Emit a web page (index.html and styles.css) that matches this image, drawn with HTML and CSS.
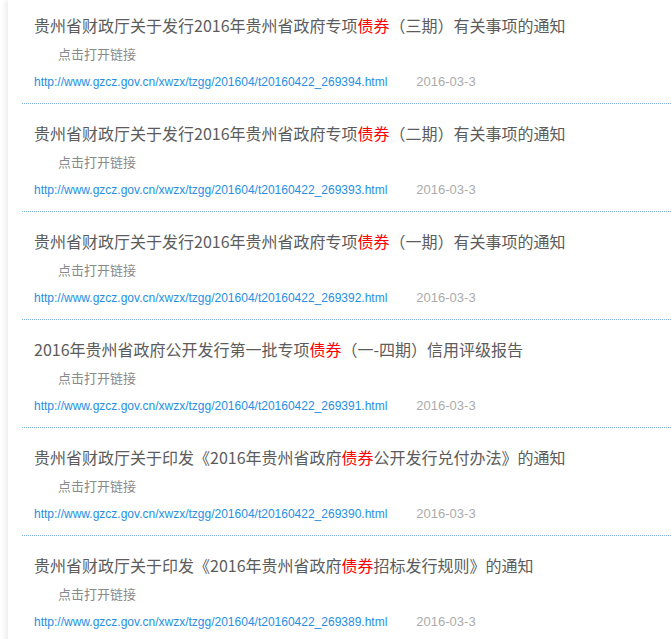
FILE: index.html
```html
<!DOCTYPE html>
<html lang="zh-CN">
<head>
  <meta charset="UTF-8">
  <meta name="viewport" content="width=device-width, initial-scale=1.0">
  <title>通知公告</title>
  <link rel="stylesheet" href="styles.css">
</head>
<body>
  <div class="news-box">
    <ul class="news-list">
      <li class="news-item">
        <h3 class="news-title">贵州省财政厅关于发行2016年贵州省政府专项<span class="hl">债券</span>（三期）有关事项的通知</h3>
        <p class="news-open">点击打开链接</p>
        <p class="news-meta"><a href="#">http://www.gzcz.gov.cn/xwzx/tzgg/201604/t20160422_269394.html</a><span class="date">2016-03-3</span></p>
      </li>
      <li class="news-item">
        <h3 class="news-title">贵州省财政厅关于发行2016年贵州省政府专项<span class="hl">债券</span>（二期）有关事项的通知</h3>
        <p class="news-open">点击打开链接</p>
        <p class="news-meta"><a href="#">http://www.gzcz.gov.cn/xwzx/tzgg/201604/t20160422_269393.html</a><span class="date">2016-03-3</span></p>
      </li>
      <li class="news-item">
        <h3 class="news-title">贵州省财政厅关于发行2016年贵州省政府专项<span class="hl">债券</span>（一期）有关事项的通知</h3>
        <p class="news-open">点击打开链接</p>
        <p class="news-meta"><a href="#">http://www.gzcz.gov.cn/xwzx/tzgg/201604/t20160422_269392.html</a><span class="date">2016-03-3</span></p>
      </li>
      <li class="news-item">
        <h3 class="news-title">2016年贵州省政府公开发行第一批专项<span class="hl">债券</span>（一-四期）信用评级报告</h3>
        <p class="news-open">点击打开链接</p>
        <p class="news-meta"><a href="#">http://www.gzcz.gov.cn/xwzx/tzgg/201604/t20160422_269391.html</a><span class="date">2016-03-3</span></p>
      </li>
      <li class="news-item">
        <h3 class="news-title">贵州省财政厅关于印发《2016年贵州省政府<span class="hl">债券</span>公开发行兑付办法》的通知</h3>
        <p class="news-open">点击打开链接</p>
        <p class="news-meta"><a href="#">http://www.gzcz.gov.cn/xwzx/tzgg/201604/t20160422_269390.html</a><span class="date">2016-03-3</span></p>
      </li>
      <li class="news-item">
        <h3 class="news-title">贵州省财政厅关于印发《2016年贵州省政府<span class="hl">债券</span>招标发行规则》的通知</h3>
        <p class="news-open">点击打开链接</p>
        <p class="news-meta"><a href="#">http://www.gzcz.gov.cn/xwzx/tzgg/201604/t20160422_269389.html</a><span class="date">2016-03-3</span></p>
      </li>
    </ul>
  </div>
</body>
</html>
```

FILE: styles.css
```css
body {
  margin: 0;
  padding: 0;
  background-color: #fff;
  font-family: "Noto Sans CJK SC", "Liberation Sans", sans-serif;
  overflow: hidden;
}
.news-box {
  margin-left: 8px;
  min-height: 639px;
  background: #fff;
  box-shadow: -3px 0 5px rgba(0,0,0,0.07);
}
.news-list {
  list-style: none;
  margin: 0;
  padding: 0 0 0 14px;
}
.news-item {
  padding: 19px 0 12px 12px;
  border-top: 1px dotted #7eaedf;
}
.news-item:first-child {
  border-top: none;
  padding-top: 15px;
}
.news-title {
  margin: 0;
  font-size: 16px;
  font-weight: normal;
  line-height: 20px;
  color: #5c5c5c;
  white-space: nowrap;
}
.news-title .hl {
  color: #f00;
}
.news-open {
  margin: 10px 0 0 24px;
  font-size: 13px;
  line-height: 18px;
  color: #8a8a8a;
}
.news-meta {
  margin: 10px 0 0;
  font-family: "Liberation Sans", Arial, sans-serif;
  font-size: 12px;
  line-height: 18px;
  white-space: nowrap;
}
.news-meta a {
  color: #2590e3;
  text-decoration: none;
}
.news-meta .date {
  margin-left: 29px;
  font-size: 13px;
  color: #ababab;
}
```
